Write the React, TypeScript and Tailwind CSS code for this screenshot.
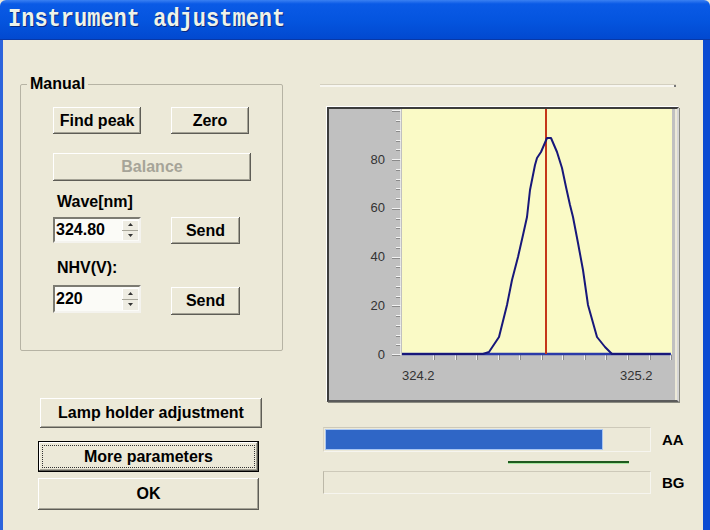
import React from "react";

const btnBase =
  "flex items-center justify-center bg-[#ece9d8] text-[16px] leading-[18px] font-bold shadow-[inset_-1px_-1px_#5e5d56,inset_1px_1px_#ffffff,inset_-2px_-2px_#a5a396]";

function Btn({
  className,
  children,
  disabled,
}: {
  className: string;
  children: React.ReactNode;
  disabled?: boolean;
}) {
  return (
    <div
      className={`${btnBase} ${disabled ? "text-[#a6a498]" : "text-black"} ${className}`}
    >
      {children}
    </div>
  );
}

function Arrow({ up }: { up?: boolean }) {
  return (
    <svg width="5" height="3" viewBox="0 0 5 3">
      {up ? (
        <polygon points="0,3 5,3 2.5,0" fill="#333" />
      ) : (
        <polygon points="0,0 5,0 2.5,3" fill="#333" />
      )}
    </svg>
  );
}

function Spin({ value, className }: { value: string; className: string }) {
  return (
    <div
      className={`flex bg-[#fbfbf7] border-2 border-t-[#7c7b72] border-l-[#7c7b72] border-b-[#f4f3ee] border-r-[#f4f3ee] ${className}`}
    >
      <div className="flex-1 flex items-center pl-[1px] text-[16px] font-bold text-black">
        {value}
      </div>
      <div className="w-[17px] flex flex-col py-[1px] pr-[1px]">
        <div className="flex-1 flex items-center justify-center bg-[#eeece2] border-b border-[#a8a69a] shadow-[inset_1px_1px_#ffffff]">
          <Arrow up />
        </div>
        <div className="flex-1 flex items-center justify-center bg-[#eeece2] shadow-[inset_1px_0_#ffffff]">
          <Arrow />
        </div>
      </div>
    </div>
  );
}

function Chart() {
  const Y0 = 245;
  const K = 2.4375;
  const yTicks: number[] = [];
  for (let v = 0; v <= 100; v += 4) yTicks.push(v);
  const xTicks: number[] = [];
  for (let k = 0; k <= 11; k++) xTicks.push(104 + k * 21.55);
  const pts = [
    [73, 245],
    [154, 245],
    [160, 243],
    [170, 228],
    [178, 196],
    [183, 171],
    [189, 148],
    [194, 126],
    [198, 108],
    [201, 81],
    [206, 56],
    [208, 49],
    [212, 43],
    [218, 29],
    [222, 29],
    [228, 43],
    [233, 59],
    [237, 78],
    [241, 96],
    [244, 108],
    [249, 134],
    [254, 161],
    [259, 196],
    [268, 228],
    [276, 238],
    [283, 245],
    [341, 245],
  ];
  return (
    <svg width="346" height="291" viewBox="0 0 346 291" className="block">
      <rect x="0" y="0" width="346" height="291" fill="#c0c0c0" />
      <rect x="73" y="0" width="270" height="245" fill="#fafac6" />
      <line x1="71.5" y1="0" x2="71.5" y2="246" stroke="#e4e4e4" strokeWidth="1" />
      {yTicks.map((v) => {
        const y = Math.round(Y0 - v * K) + 0.5;
        const major = v % 20 === 0;
        return (
          <g key={v}>
            <line x1={major ? 63 : 67} y1={y} x2={72} y2={y} stroke="#f2f2f2" strokeWidth="1" />
            <line x1={major ? 63 : 67} y1={y + 1} x2={71} y2={y + 1} stroke="#8a8a8a" strokeWidth="1" />
          </g>
        );
      })}
      {[0, 20, 40, 60, 80].map((v) => (
        <text
          key={v}
          x="56"
          y={Y0 - v * K + 4.5}
          textAnchor="end"
          fontSize="13"
          fill="#333"
          fontFamily="'Liberation Sans', Arial, sans-serif"
        >
          {v}
        </text>
      ))}
      {xTicks.map((x) => (
        <g key={x}>
          <line x1={Math.round(x) + 0.5} y1="246" x2={Math.round(x) + 0.5} y2="251" stroke="#f2f2f2" strokeWidth="1" />
          <line x1={Math.round(x) + 1.5} y1="246" x2={Math.round(x) + 1.5} y2="251" stroke="#8a8a8a" strokeWidth="1" />
        </g>
      ))}
      <text x="73" y="271" fontSize="13" fill="#333" fontFamily="'Liberation Sans', Arial, sans-serif">
        324.2
      </text>
      <text x="291" y="271" fontSize="13" fill="#333" fontFamily="'Liberation Sans', Arial, sans-serif">
        325.2
      </text>
      <line x1="73" y1="245" x2="342" y2="245" stroke="#2a3aa8" strokeWidth="2.5" />
      <line x1="217" y1="0" x2="217" y2="245" stroke="#c4361a" strokeWidth="2" />
      <polyline
        points={pts.map((p) => p.join(",")).join(" ")}
        fill="none"
        stroke="#17177a"
        strokeWidth="2"
        strokeLinejoin="round"
      />
    </svg>
  );
}

export default function App() {
  return (
    <div className="w-[710px] h-[530px] overflow-hidden flex flex-col bg-[#ece9d8] font-['Liberation_Sans',Arial,sans-serif] text-black">
      <div className="h-[40px] shrink-0 flex items-center pl-[8px] bg-[linear-gradient(#3a80f2_0%,#0a5ae6_10%,#0454de_55%,#0249d0_100%)] border-b border-[#0838a8] rounded-t-[6px]">
        <span className="inline-block scale-y-[1.2] font-['Liberation_Mono',monospace] font-bold text-[22px] leading-[24px] text-[#eef3ea] [text-shadow:1px_1px_#0a2a80]">
          Instrument adjustment
        </span>
      </div>
      <div className="flex-1 flex border-l-[3px] border-l-[#2c64dc] border-r-[7px] border-r-[#0a4bd2]">
        {/* Left column */}
        <div className="ml-[17px] w-[263px] shrink-0 flex flex-col">
          <fieldset className="mt-[35px] h-[276px] border border-[#b6b3a4] rounded-[2px] p-0">
            <legend className="ml-[6px] px-[3px] text-[16px] leading-[18px] font-bold">
              Manual
            </legend>
            <div className="pl-[32px] flex flex-col">
              <div className="mt-[14px] flex gap-[30px]">
                <Btn className="w-[88px] h-[27px]">Find peak</Btn>
                <Btn className="w-[78px] h-[27px]">Zero</Btn>
              </div>
              <Btn className="mt-[19px] w-[198px] h-[28px]" disabled>
                Balance
              </Btn>
              <div className="mt-[12px] pl-[4px] text-[16px] leading-[18px] font-bold">
                Wave[nm]
              </div>
              <div className="mt-[6px] flex items-start gap-[30px]">
                <Spin value="324.80" className="w-[88px] h-[26px]" />
                <Btn className="w-[69px] h-[27px]">Send</Btn>
              </div>
              <div className="mt-[15px] pl-[4px] text-[16px] leading-[18px] font-bold">
                NHV(V):
              </div>
              <div className="mt-[8px] flex items-start gap-[30px]">
                <Spin value="220" className="w-[88px] h-[28px]" />
                <Btn className="mt-[2px] w-[69px] h-[28px]">Send</Btn>
              </div>
            </div>
          </fieldset>
          <Btn className="mt-[47px] ml-[20px] w-[222px] h-[30px]">
            Lamp holder adjustment
          </Btn>
          <div className="mt-[13px] ml-[18px] w-[221px] h-[31px] border border-black flex">
            <div className={`${btnBase} flex-1 p-[3px]`}>
              <div className="w-full h-full flex items-center justify-center border border-dotted border-[#333]">
                More parameters
              </div>
            </div>
          </div>
          <Btn className="mt-[6px] ml-[18px] w-[221px] h-[32px]">OK</Btn>
        </div>

        {/* Right column */}
        <div className="ml-[37px] flex-1 flex flex-col">
          <div className="mt-[44px] w-[356px] h-[3px] border-t border-[#d3cfbf] bg-[#f7f6f0] flex justify-end">
            <div className="w-[2px] h-[2px] bg-[#777]" />
          </div>
          <div className="mt-[20px] ml-[7px] w-[352px] h-[295px] border-t-2 border-l-2 border-b-2 border-r-2 border-t-[#3c3c3c] border-l-[#3c3c3c] border-b-[#5a5a5a] border-r-[#d6d6d6] shadow-[-1px_-1px_0_#ffffff,1px_1px_0_#8a8a80] overflow-hidden">
            <Chart />
          </div>
          <div className="mt-[25px] flex items-center">
            <div className="ml-[3px] w-[328px] h-[25px] border-t border-[#cdc9b9] border-l border-l-[#d8d4c4] border-b border-b-[#f6f5ef] border-r border-r-[#f6f5ef] p-[1px]">
              <div className="w-[278px] h-full bg-[#2f66c6] border border-[#a9c6f2]" />
            </div>
            <div className="ml-[11px] text-[15px] leading-[18px] font-bold">AA</div>
          </div>
          <div className="mt-[9px] ml-[188px] w-[121px] h-[2px] bg-[#1f5a1f] shadow-[0_1px_0_#a8e6a0]" />
          <div className="mt-[8px] flex items-center">
            <div className="ml-[3px] w-[328px] h-[23px] border-t border-[#cdc9b9] border-l border-l-[#bcb8a8] border-b border-b-[#f6f5ef] border-r border-r-[#f6f5ef]" />
            <div className="ml-[11px] text-[15px] leading-[18px] font-bold">BG</div>
          </div>
        </div>
      </div>
    </div>
  );
}
